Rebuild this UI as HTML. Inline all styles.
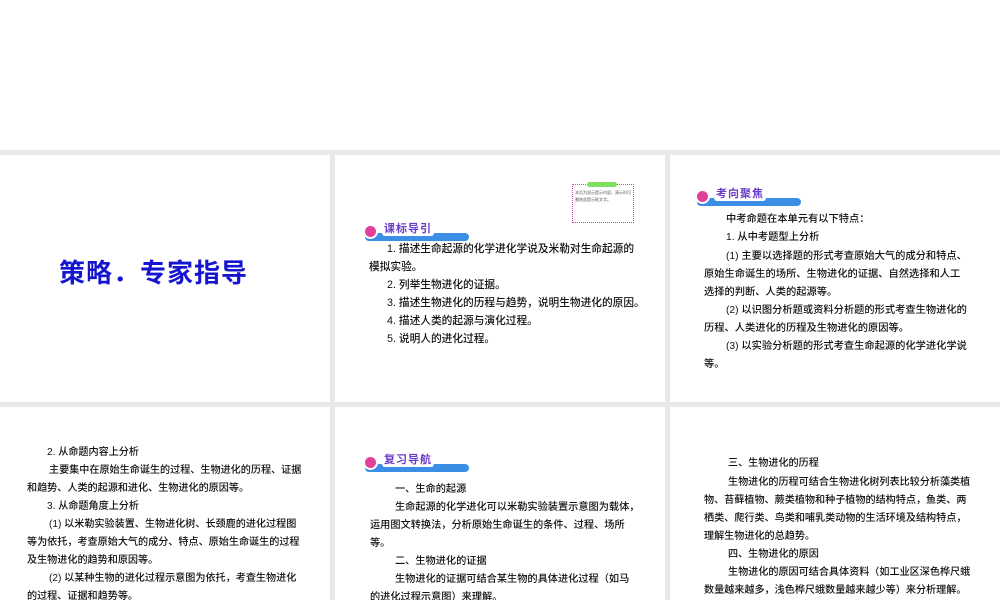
<!DOCTYPE html><html><head><meta charset="utf-8"><style>
body{margin:0;width:1000px;height:600px;background:#e8e8e8;position:relative;overflow:hidden;font-family:"Liberation Sans","Noto Sans CJK SC",sans-serif;}
.p{position:absolute;background:#fff;overflow:hidden}
.t{position:absolute;font-size:10.7px;color:#111;white-space:nowrap;line-height:12px;font-weight:500}
.s10 .t{font-size:10.1px}
.s102 .t{font-size:10.25px}
.s1022 .t{font-size:10.2px}
.bad{position:absolute;width:110px;height:24px}
.bad .bar{position:absolute;left:2px;top:13px;width:104px;height:8px;background:#3a8ee6;border-radius:4px}
.bad .c{position:absolute;left:0;top:4px;width:15px;height:15px;border-radius:50%;background:#e0409a;border:2px solid #fff;box-sizing:border-box}
.bad .s{position:absolute;left:19px;top:0;font:bold 11px "Noto Sans CJK SC",sans-serif;color:#6a3bc9;letter-spacing:1px;background:#fff;padding:0 2px;border-radius:3px}
</style></head><body>
<div class="p" style="left:0;top:0;width:1000px;height:150px"></div>
<div class="p" style="left:0;top:155px;width:330px;height:247px">
<div style="position:absolute;left:59px;top:98px;font:bold 26px 'Noto Sans CJK SC',sans-serif;color:#1515d0;letter-spacing:1px">策略．专家指导</div></div>
<div class="p" style="left:335px;top:155px;width:330px;height:247px">
<div style="position:absolute;left:237px;top:29px;width:62px;height:39px;border:1px dotted #d040c0;font-size:4px;color:#555;line-height:7px;padding:4px 2px;box-sizing:border-box">本页为显示提示内容，演示时可删除此提示框文字。</div>
<div style="position:absolute;left:252px;top:27px;width:30px;height:5px;background:#80e060;border-radius:3px"></div>
<div class="bad" style="left:28px;top:65px"><div class="bar"></div><div class="c"></div><div class="s">课标导引</div></div>
<div class="t" style="left:52px;top:88px">1. 描述生命起源的化学进化学说及米勒对生命起源的</div>
<div class="t" style="left:34px;top:106px">模拟实验。</div>
<div class="t" style="left:52px;top:124px">2. 列举生物进化的证据。</div>
<div class="t" style="left:52px;top:142px">3. 描述生物进化的历程与趋势，说明生物进化的原因。</div>
<div class="t" style="left:52px;top:160px">4. 描述人类的起源与演化过程。</div>
<div class="t" style="left:52px;top:178px">5. 说明人的进化过程。</div></div>
<div class="p s102" style="left:670px;top:155px;width:330px;height:247px">
<div class="bad" style="left:25px;top:30px"><div class="bar"></div><div class="c"></div><div class="s">考向聚焦</div></div>
<div class="t" style="left:56px;top:59px">中考命题在本单元有以下特点：</div>
<div class="t" style="left:56px;top:77px">1. 从中考题型上分析</div>
<div class="t" style="left:56px;top:96px">(1) 主要以选择题的形式考查原始大气的成分和特点、</div>
<div class="t" style="left:34px;top:114px">原始生命诞生的场所、生物进化的证据、自然选择和人工</div>
<div class="t" style="left:34px;top:132px">选择的判断、人类的起源等。</div>
<div class="t" style="left:56px;top:150px">(2) 以识图分析题或资料分析题的形式考查生物进化的</div>
<div class="t" style="left:34px;top:168px">历程、人类进化的历程及生物进化的原因等。</div>
<div class="t" style="left:56px;top:186px">(3) 以实验分析题的形式考查生命起源的化学进化学说</div>
<div class="t" style="left:34px;top:204px">等。</div></div>
<div class="p s10" style="left:0;top:407px;width:330px;height:193px">
<div class="t" style="left:47px;top:40px">2. 从命题内容上分析</div>
<div class="t" style="left:49px;top:58px">主要集中在原始生命诞生的过程、生物进化的历程、证据</div>
<div class="t" style="left:27px;top:76px">和趋势、人类的起源和进化、生物进化的原因等。</div>
<div class="t" style="left:47px;top:94px">3. 从命题角度上分析</div>
<div class="t" style="left:49px;top:112px">(1) 以米勒实验装置、生物进化树、长颈鹿的进化过程图</div>
<div class="t" style="left:27px;top:130px">等为依托，考查原始大气的成分、特点、原始生命诞生的过程</div>
<div class="t" style="left:27px;top:148px">及生物进化的趋势和原因等。</div>
<div class="t" style="left:49px;top:166px">(2) 以某种生物的进化过程示意图为依托，考查生物进化</div>
<div class="t" style="left:27px;top:184px">的过程、证据和趋势等。</div></div>
<div class="p s1022" style="left:335px;top:407px;width:330px;height:193px">
<div class="bad" style="left:28px;top:44px"><div class="bar"></div><div class="c"></div><div class="s">复习导航</div></div>
<div class="t" style="left:60px;top:77px">一、生命的起源</div>
<div class="t" style="left:60px;top:95px">生命起源的化学进化可以米勒实验装置示意图为载体，</div>
<div class="t" style="left:35px;top:113px">运用图文转换法，分析原始生命诞生的条件、过程、场所</div>
<div class="t" style="left:35px;top:131px">等。</div>
<div class="t" style="left:60px;top:149px">二、生物进化的证据</div>
<div class="t" style="left:60px;top:167px">生物进化的证据可结合某生物的具体进化过程（如马</div>
<div class="t" style="left:35px;top:185px">的进化过程示意图）来理解。</div></div>
<div class="p s10" style="left:670px;top:407px;width:330px;height:193px">
<div class="t" style="left:58px;top:51px">三、生物进化的历程</div>
<div class="t" style="left:58px;top:70px">生物进化的历程可结合生物进化树列表比较分析藻类植</div>
<div class="t" style="left:34px;top:88px">物、苔藓植物、蕨类植物和种子植物的结构特点，鱼类、两</div>
<div class="t" style="left:34px;top:106px">栖类、爬行类、鸟类和哺乳类动物的生活环境及结构特点，</div>
<div class="t" style="left:34px;top:124px">理解生物进化的总趋势。</div>
<div class="t" style="left:58px;top:142px">四、生物进化的原因</div>
<div class="t" style="left:58px;top:160px">生物进化的原因可结合具体资料（如工业区深色桦尺蛾</div>
<div class="t" style="left:34px;top:178px">数量越来越多，浅色桦尺蛾数量越来越少等）来分析理解。</div></div>
</body></html>
